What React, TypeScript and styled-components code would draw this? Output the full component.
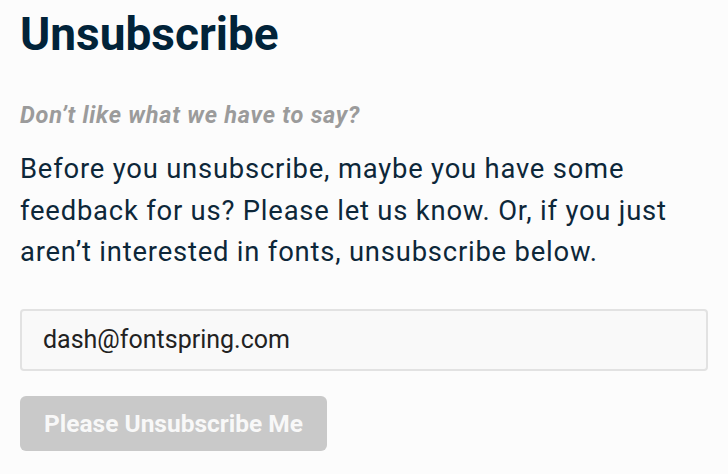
import React, { useState } from "react";
import styled, { createGlobalStyle } from "styled-components";

const GlobalStyle = createGlobalStyle`
  html, body {
    margin: 0;
    padding: 0;
    background: #fcfcfc;
  }
  body {
    font-family: Roboto, "Liberation Sans", sans-serif;
  }
`;

const UnsubscribeForm = () => {
  const [email, setEmail] = useState("dash@fontspring.com");
  return (
    <PageContainer>
      <Title>Unsubscribe</Title>
      <Tagline>Don’t like what we have to say?</Tagline>
      <BodyText>
        Before you unsubscribe, maybe you have some feedback for us? Please let
        us know. Or, if you just aren’t interested in fonts, unsubscribe below.
      </BodyText>
      <EmailInput
        value={email}
        onChange={(e) => {
          setEmail(e.target.value);
        }}
      />
      <SubmitButton type="button">Please Unsubscribe Me</SubmitButton>
    </PageContainer>
  );
};

const PageContainer = styled.div`
  display: flex;
  flex-direction: column;
  align-items: flex-start;
  padding: 8px 20px 0 20px;
  width: 728px;
  box-sizing: border-box;
`;

const Title = styled.h1`
  margin: 0;
  font-size: 46px;
  line-height: 52px;
  font-weight: 700;
  color: #012339;
`;

const Tagline = styled.div`
  margin-top: 41px;
  font-size: 23.5px;
  line-height: 28px;
  font-style: italic;
  font-weight: 700;
  letter-spacing: 0.75px;
  color: #9b9b9b;
`;

const BodyText = styled.p`
  margin: 20px 0 0;
  font-size: 27.4px;
  line-height: 41.5px;
  letter-spacing: 0.8px;
  color: #0d2739;
  max-width: 680px;
`;

const EmailInput = styled.input`
  margin-top: 35px;
  width: 688px;
  height: 62px;
  box-sizing: border-box;
  padding: 0 21px;
  font-family: Roboto, "Liberation Sans", sans-serif;
  font-size: 25px;
  color: #222;
  background: #f9f9f9;
  border: 2px solid #e2e2e2;
  border-radius: 4px;
  outline: none;
`;

const SubmitButton = styled.button`
  margin-top: 25px;
  width: 307px;
  height: 55px;
  padding: 0;
  font-family: Roboto, "Liberation Sans", sans-serif;
  font-size: 24.5px;
  font-weight: 700;
  color: #f8f8f8;
  background: #c9c9c9;
  border: none;
  border-radius: 6px;
`;

const App = () => (
  <>
    <GlobalStyle />
    <UnsubscribeForm />
  </>
);

export default App;
